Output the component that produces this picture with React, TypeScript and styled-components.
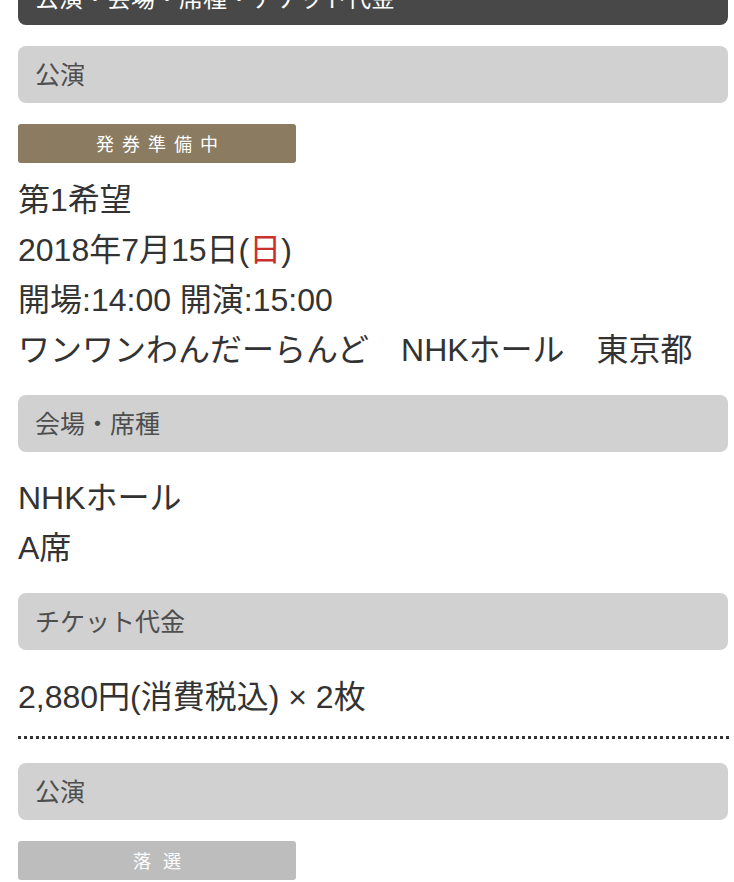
import React from 'react'
import styled, {createGlobalStyle} from 'styled-components'

const GlobalStl = createGlobalStyle`
  html, body {
    margin: 0;
    padding: 0;
    background-color: #fff;
  }
  body {
    font-family: "Liberation Sans", "Noto Sans CJK JP", sans-serif;
    color: #333;
  }
`

const PageStl = styled.div`
  width: 710px;
  padding: 0 0 0 18px;
  display: flex;
  flex-direction: column;
`

const TabBarStl = styled.div`
  margin-top: -33px;
  height: 58px;
  border-radius: 0 0 8px 8px;
  background-color: #484848;
  color: #fff;
  font-size: 24px;
  display: flex;
  align-items: center;
  padding: 0 17px;
`

const HeadStl = styled.div<{top: number}>`
  margin-top: ${({top}) => top}px;
  height: 57px;
  box-sizing: border-box;
  padding: 0 17px 4px;
  border-radius: 8px;
  background-color: #d1d1d1;
  color: #4e4e4e;
  font-size: 25px;
  display: flex;
  align-items: center;
`

const BadgeStl = styled.div<{tone: string, spacing: number}>`
  margin-top: 21px;
  width: 278px;
  height: 39px;
  box-sizing: border-box;
  padding-bottom: 2px;
  border-radius: 3px;
  background-color: ${({tone}) => tone};
  color: #fff;
  font-size: 18px;
  letter-spacing: ${({spacing}) => spacing}px;
  text-indent: ${({spacing}) => spacing}px;
  display: flex;
  align-items: center;
  justify-content: center;
`

const InfoStl = styled.div<{top: number}>`
  margin-top: ${({top}) => top}px;
  font-size: 32px;
  line-height: 50px;
  white-space: nowrap;
`

const RedStl = styled.span`
  color: #c9322c;
`

const DotLineStl = styled.div`
  margin: 14px -4px 0 0;
  height: 3px;
  background-image: repeating-linear-gradient(to right, #333 0 3px, transparent 3px 6px);
`

export default function App() {
    return (
        <>
            <GlobalStl/>
            <PageStl>
                <TabBarStl>公演・会場・席種・チケット代金</TabBarStl>

                <HeadStl top={21}>公演</HeadStl>
                <BadgeStl tone="#8a7b61" spacing={8}>発券準備中</BadgeStl>
                <InfoStl top={12}>
                    <div>第1希望</div>
                    <div>2018年7月15日(<RedStl>日</RedStl>)</div>
                    <div>開場:14:00 開演:15:00</div>
                    <div>ワンワンわんだーらんど　NHKホール　東京都</div>
                </InfoStl>

                <HeadStl top={20}>会場・席種</HeadStl>
                <InfoStl top={21}>
                    <div>NHKホール</div>
                    <div>A席</div>
                </InfoStl>

                <HeadStl top={20}>チケット代金</HeadStl>
                <InfoStl top={22}>
                    <div>2,880円(消費税込) × 2枚</div>
                </InfoStl>
                <DotLineStl/>

                <HeadStl top={24}>公演</HeadStl>
                <BadgeStl tone="#bdbdbd" spacing={12}>落選</BadgeStl>
            </PageStl>
        </>
    )
}
